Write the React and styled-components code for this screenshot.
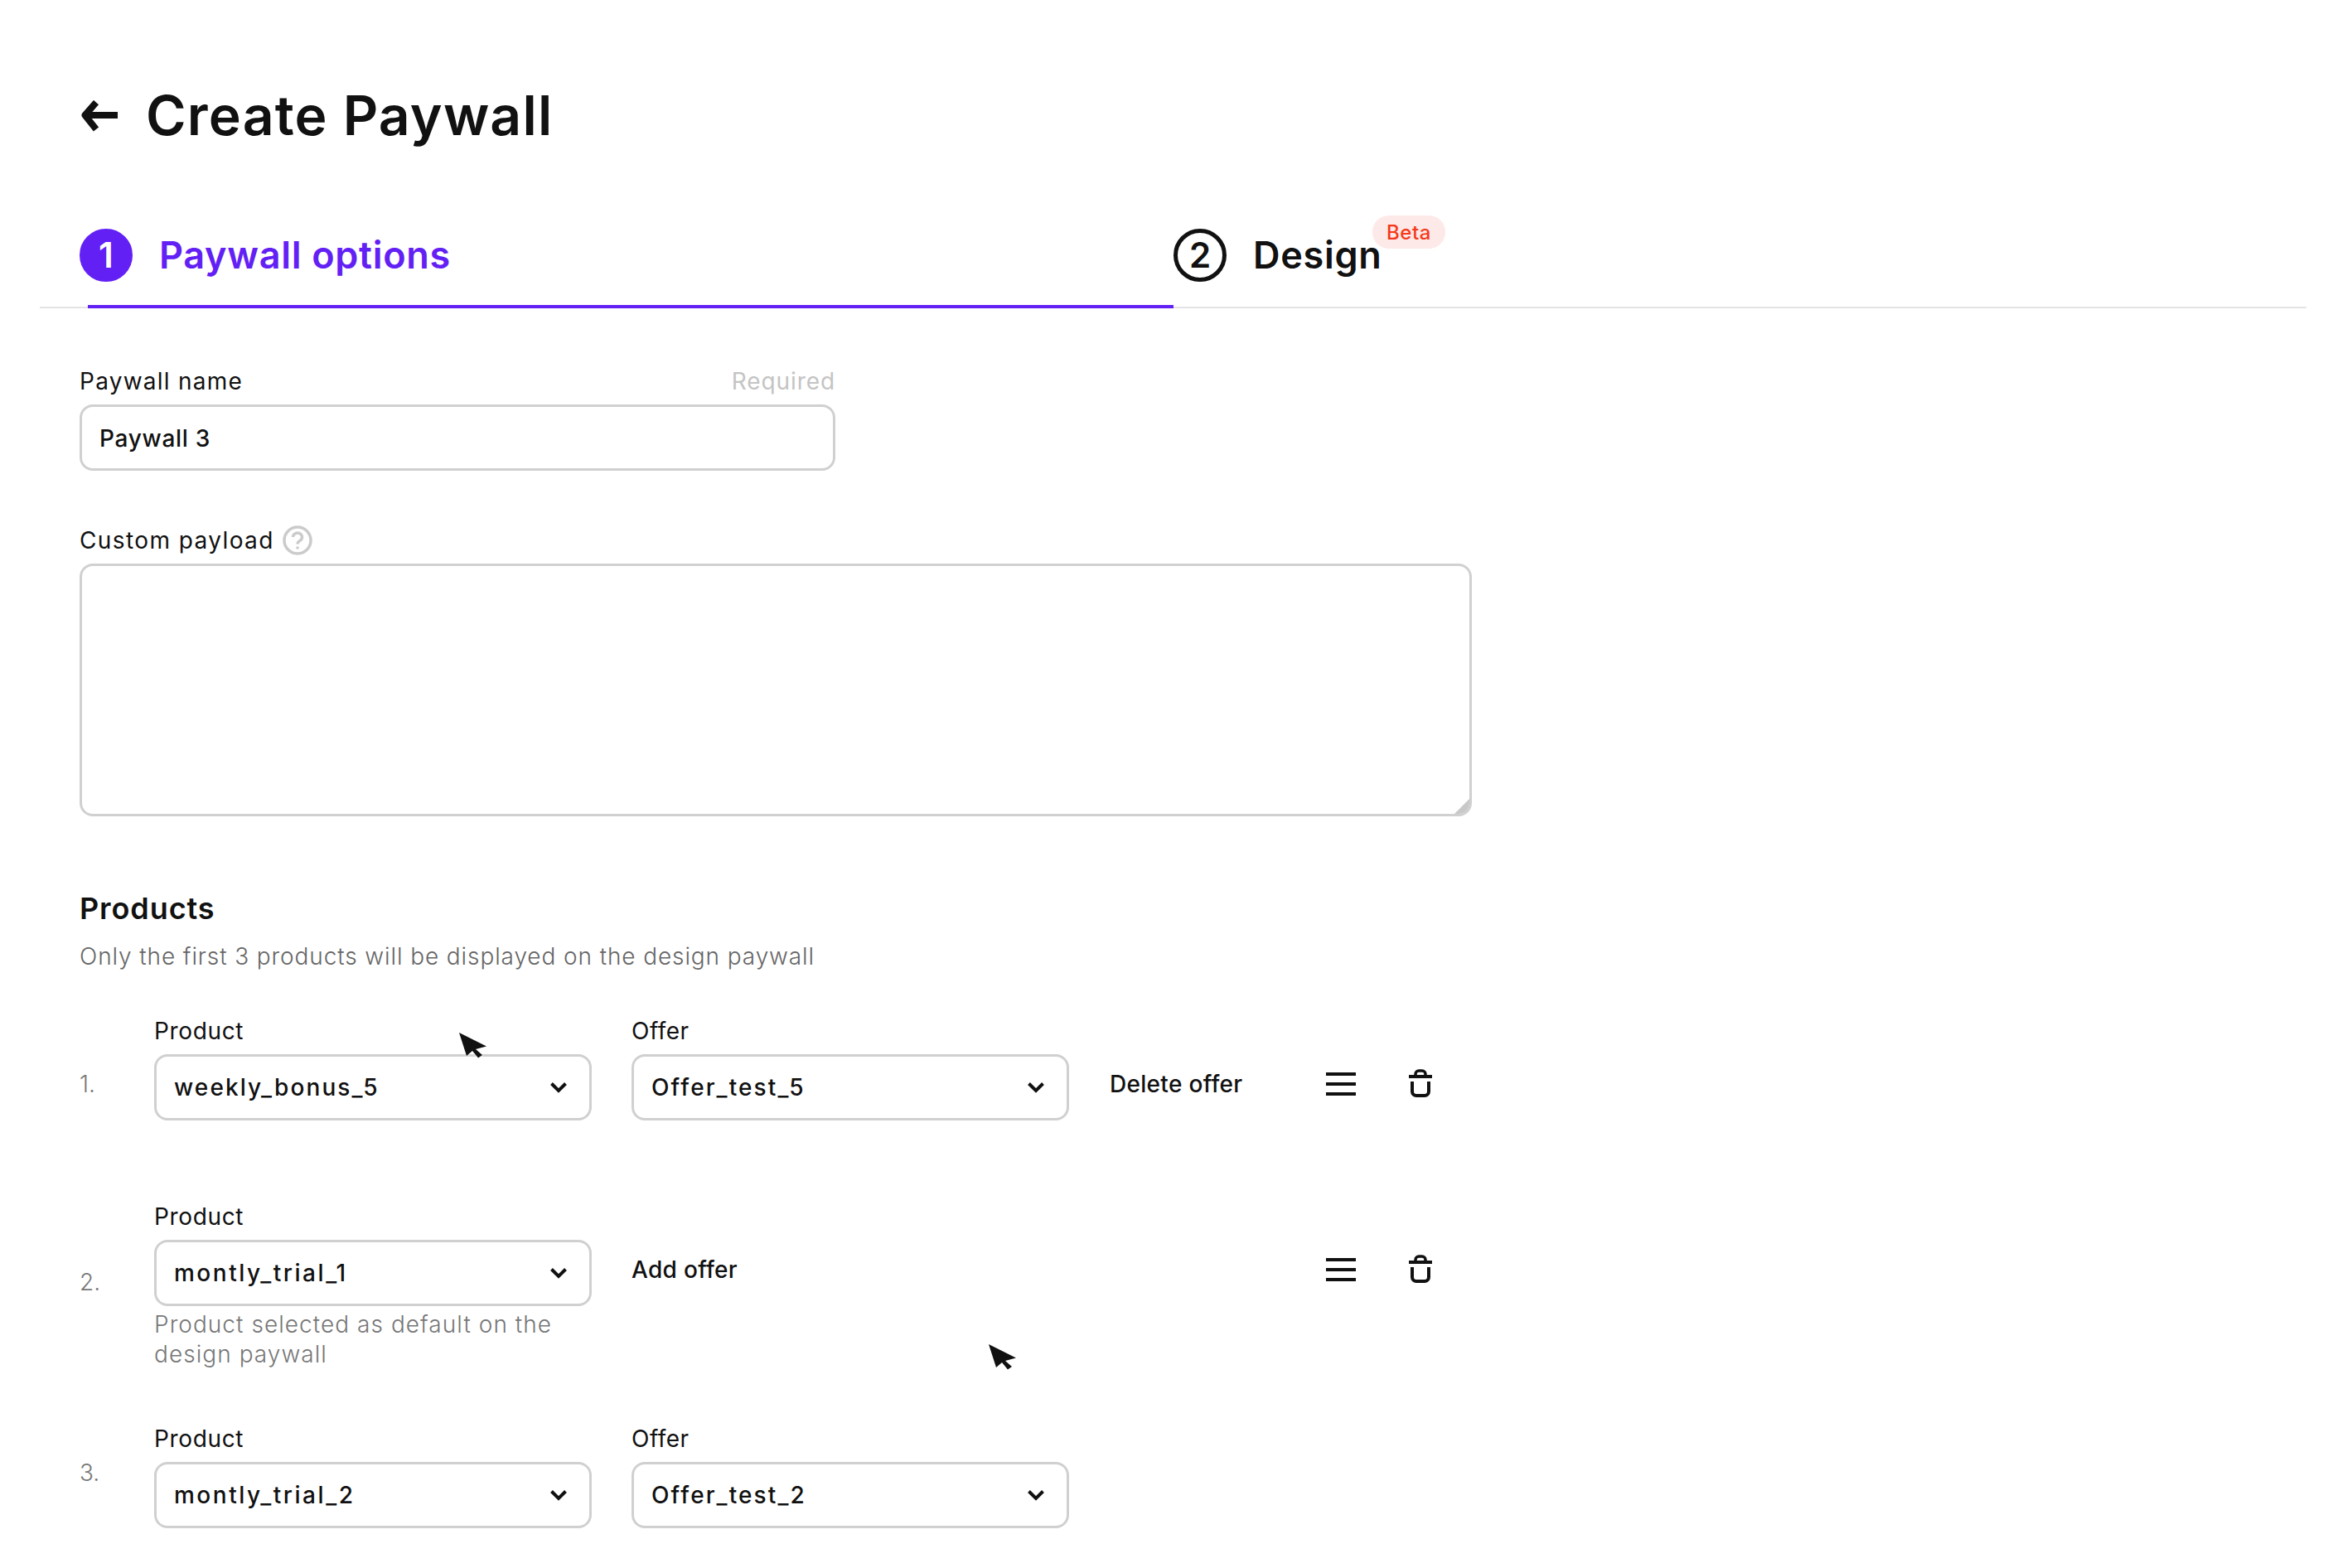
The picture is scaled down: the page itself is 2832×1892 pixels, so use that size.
import React from "react"
import styled, { createGlobalStyle } from "styled-components"

const Global = createGlobalStyle`
  html, body {
    margin: 0;
    padding: 0;
    background: #fff;
  }
  body {
    font-family: Inter, "Liberation Sans", sans-serif;
    color: #111;
  }
`

const Page = styled.div`
  position: relative;
  width: 2832px;
  height: 1892px;
  overflow: hidden;
  background: #fff;
`

const Header = styled.header`
  display: flex;
  align-items: center;
  gap: 33px;
  height: 80px;
  padding: 100px 0 0 97px;
`

const Title = styled.h1`
  margin: 0;
  padding-bottom: 2px;
  font-size: 66px;
  line-height: 78px;
  font-weight: 600;
  letter-spacing: 1.2px;
`

const Tabs = styled.nav`
  display: flex;
  height: 94px;
  margin: 96px 49px 0 48px;
  padding-left: 48px;
  border-bottom: 2px solid #e4e4e4;
`

const Tab = styled.div`
  position: relative;
  display: flex;
  gap: 32px;
  width: ${(p) => (p.$active ? "1320px" : "auto")};
  color: ${(p) => (p.$active ? "#6320f5" : "#111")};

  ${(p) =>
    p.$active &&
    `&::after {
      content: "";
      position: absolute;
      left: 10px;
      right: 0;
      bottom: -2px;
      height: 4px;
      background: #6320f5;
    }`}
`

const StepCircle = styled.span`
  display: flex;
  align-items: center;
  justify-content: center;
  box-sizing: border-box;
  width: 64px;
  height: 64px;
  border-radius: 50%;
  border: 5px solid ${(p) => (p.$active ? "#6320f5" : "#111")};
  background: ${(p) => (p.$active ? "#6320f5" : "#fff")};
  color: ${(p) => (p.$active ? "#fff" : "#111")};
  font-size: 42px;
  font-weight: 600;
  line-height: 1;
`

const TabLabel = styled.span`
  font-size: 45px;
  line-height: 64px;
  font-weight: 600;
  letter-spacing: 0.7px;
`

const Badge = styled.span`
  position: absolute;
  left: 240px;
  top: -16px;
  display: flex;
  align-items: center;
  justify-content: center;
  width: 88px;
  height: 40px;
  border-radius: 20px;
  background: #fde9e8;
  color: #f5391a;
  font-size: 24px;
  font-weight: 500;
  letter-spacing: 0.5px;
`

const Form = styled.main`
  padding: 68px 0 0 96px;
`

const Field = styled.section`
  width: ${(p) => p.$width};
  margin-bottom: ${(p) => p.$gap || "0"};
`

const LabelRow = styled.div`
  display: flex;
  align-items: center;
  justify-content: space-between;
  height: 40px;
  margin-bottom: 8px;
`

const Label = styled.label`
  display: flex;
  align-items: center;
  gap: 10px;
  font-size: 28px;
  line-height: 40px;
  letter-spacing: ${(p) => p.$spacing};
`

const Hint = styled.span`
  font-size: 28px;
  line-height: 40px;
  letter-spacing: 0.9px;
  color: #c4c4c4;
`

const InputBox = styled.div`
  display: flex;
  align-items: center;
  box-sizing: border-box;
  height: 80px;
  padding: 1px 21px 0;
  border: 3px solid #d0d0d0;
  border-radius: 16px;
  font-size: 28px;
  font-weight: 500;
  letter-spacing: 0.7px;
`

const TextArea = styled.div`
  position: relative;
  box-sizing: border-box;
  height: 305px;
  border: 3px solid #d0d0d0;
  border-radius: 16px;
  overflow: hidden;

  &::after {
    content: "";
    position: absolute;
    right: 0;
    bottom: 0;
    width: 18px;
    height: 18px;
    background: #c8c8c8;
    clip-path: polygon(100% 0, 100% 100%, 0 100%);
  }
`

const SectionTitle = styled.h2`
  margin: 0 0 14px;
  font-size: 36px;
  line-height: 48px;
  font-weight: 600;
  letter-spacing: 0.9px;
`

const SectionNote = styled.p`
  margin: 0 0 50px;
  font-size: 28px;
  line-height: 40px;
  font-weight: 300;
  letter-spacing: 0.9px;
  color: #666;
`

const Row = styled.div`
  display: grid;
  grid-template-columns: 90px 576px 577px 261px 100px 28px;
  align-items: start;
  margin-bottom: ${(p) => p.$gap || "0"};
`

const Index = styled.span`
  padding-top: ${(p) => p.$top};
  font-size: 28px;
  line-height: 40px;
  font-weight: 300;
  color: #777;
`

const SelectBox = styled.div`
  display: flex;
  align-items: center;
  justify-content: space-between;
  box-sizing: border-box;
  width: 528px;
  height: 80px;
  padding: 0 27px 0 21px;
  border: 3px solid #d0d0d0;
  border-radius: 16px;
  font-size: 28px;
  font-weight: 500;
  letter-spacing: ${(p) => p.$spacing};
`

const Help = styled.p`
  width: 526px;
  margin: 4px 0 0;
  font-size: 28px;
  line-height: 36px;
  font-weight: 300;
  letter-spacing: 1.05px;
  color: #777;
`

const Action = styled.span`
  padding-top: 64px;
  font-size: 28px;
  line-height: 40px;
  font-weight: 500;
  letter-spacing: 0.3px;
`

const IconCell = styled.span`
  display: flex;
  padding-top: ${(p) => p.$top};
`

const Cursor = styled.svg`
  position: absolute;
  left: ${(p) => p.$x}px;
  top: ${(p) => p.$y}px;
  filter: drop-shadow(0 0 2px rgba(255, 255, 255, 0.95));
`

const BackArrow = () => (
  <svg width="46" height="38" viewBox="0 0 46 38" fill="none" stroke="#111" strokeWidth="8" strokeLinejoin="round">
    <path d="M19 2.500 5.500 18 19 35" />
    <path d="M8 18h37" />
  </svg>
)

const HelpIcon = () => (
  <svg width="36" height="36" viewBox="0 0 36 36" fill="none" stroke="#cbcbcb" strokeWidth="3.500">
    <circle cx="18" cy="18" r="16" />
    <path d="M12.500 14a5.500 5 0 1 1 8.400 4.400c-2 1.300-2.900 2-2.900 4.100" />
    <circle cx="18" cy="27" r="1.800" fill="#cbcbcb" stroke="none" />
  </svg>
)

const Chevron = () => (
  <svg width="20" height="13" viewBox="0 0 20 13" fill="none" stroke="#111" strokeWidth="4">
    <path d="M1.500 1.500 10 10l8.500-8.500" />
  </svg>
)

const Burger = () => (
  <svg width="36" height="28" viewBox="0 0 36 28" fill="#111">
    <rect width="36" height="4" />
    <rect y="12" width="36" height="4" />
    <rect y="24" width="36" height="4" />
  </svg>
)

const Trash = () => (
  <svg width="28" height="34" viewBox="0 0 28 34" fill="none" stroke="#111" strokeWidth="4">
    <path d="M0 9h28" />
    <path d="M8 8V6a4 4 0 0 1 4-4h4a4 4 0 0 1 4 4v2" strokeWidth="3.500" />
    <path d="M4 15v12a5 5 0 0 0 5 5h10a5 5 0 0 0 5-5V15" />
  </svg>
)

const Pointer = ({ x, y }) => (
  <Cursor $x={x} $y={y} width="36" height="36" viewBox="0 0 36 36">
    <path d="M2 2 35 18.500 22 22 30 29 25 32.500 18 24 11 30Z" fill="#111" />
  </Cursor>
)

const Select = ({ value, spacing = "2.1px" }) => (
  <SelectBox $spacing={spacing}>
    <span>{value}</span>
    <Chevron />
  </SelectBox>
)

const RowIcons = () => (
  <>
    <IconCell $top="70px">
      <Burger />
    </IconCell>
    <IconCell $top="66px">
      <Trash />
    </IconCell>
  </>
)

const ProductRow = ({ index, top, gap, product, productSpacing, offer, help, action, icons }) => (
  <Row $gap={gap}>
    <Index $top={top}>{index}.</Index>
    <div>
      <LabelRow>
        <Label $spacing="0.65px">Product</Label>
      </LabelRow>
      <Select value={product} spacing={productSpacing} />
      {help && <Help>{help}</Help>}
    </div>
    {offer ? (
      <div>
        <LabelRow>
          <Label $spacing="0.5px">Offer</Label>
        </LabelRow>
        <Select value={offer} />
      </div>
    ) : (
      <Action>Add offer</Action>
    )}
    {action ? <Action>{action}</Action> : <span />}
    {icons && <RowIcons />}
  </Row>
)

const App = () => (
  <Page>
    <Global />
    <Header>
      <BackArrow />
      <Title>Create Paywall</Title>
    </Header>
    <Tabs>
      <Tab $active>
        <StepCircle $active>1</StepCircle>
        <TabLabel>Paywall options</TabLabel>
      </Tab>
      <Tab>
        <StepCircle>2</StepCircle>
        <TabLabel>Design</TabLabel>
        <Badge>Beta</Badge>
      </Tab>
    </Tabs>
    <Form>
      <Field $width="912px" $gap="64px">
        <LabelRow>
          <Label $spacing="1.25px">Paywall name</Label>
          <Hint>Required</Hint>
        </LabelRow>
        <InputBox>Paywall 3</InputBox>
      </Field>
      <Field $width="1680px" $gap="87px">
        <LabelRow>
          <Label $spacing="1.4px">
            Custom payload
            <HelpIcon />
          </Label>
        </LabelRow>
        <TextArea />
      </Field>
      <SectionTitle>Products</SectionTitle>
      <SectionNote>Only the first 3 products will be displayed on the design paywall</SectionNote>
      <ProductRow
        index={1}
        top="64px"
        gap="96px"
        product="weekly_bonus_5"
        offer="Offer_test_5"
        action="Delete offer"
        icons
      />
      <ProductRow
        index={2}
        top="79px"
        gap="64px"
        product="montly_trial_1"
        productSpacing="2.5px"
        help="Product selected as default on the design paywall"
        icons
      />
      <ProductRow index={3} top="41px" product="montly_trial_2" productSpacing="2.5px" offer="Offer_test_2" />
    </Form>
    <Pointer x={552} y={1244} />
    <Pointer x={1191} y={1620} />
  </Page>
)

export default App
